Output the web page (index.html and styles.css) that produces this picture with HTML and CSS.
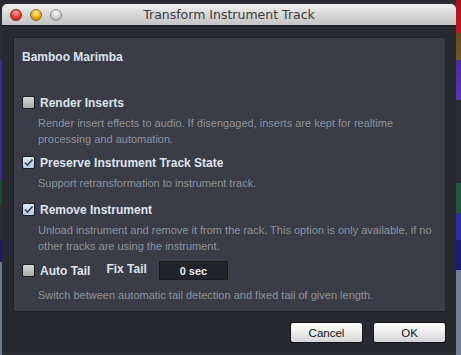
FILE: index.html
```html
<!DOCTYPE html>
<html>
<head>
<meta charset="utf-8">
<link rel="stylesheet" href="styles.css">
</head>
<body>
<div class="window">
  <div class="titlebar">
    <div class="lights">
      <span class="light red"></span>
      <span class="light yellow"></span>
      <span class="light gray"></span>
    </div>
    <div class="title">Transform Instrument Track</div>
    <div></div>
  </div>
  <div class="content">
    <div class="panel">
      <div class="name">Bamboo Marimba</div>

      <div class="option opt-render">
        <span class="check"></span>
        <span class="label">Render Inserts</span>
      </div>
      <div class="desc">Render insert effects to audio. If disengaged, inserts are kept for realtime<br>processing and automation.</div>

      <div class="option opt-preserve">
        <span class="check on"><svg viewBox="0 0 13 13" width="13" height="13"><path d="M3 6.5 L5.5 9 L10.5 3.5" fill="none" stroke="#3a3f4a" stroke-width="1.6"/></svg></span>
        <span class="label">Preserve Instrument Track State</span>
      </div>
      <div class="desc">Support retransformation to instrument track.</div>

      <div class="option opt-remove">
        <span class="check on"><svg viewBox="0 0 13 13" width="13" height="13"><path d="M3 6.5 L5.5 9 L10.5 3.5" fill="none" stroke="#3a3f4a" stroke-width="1.6"/></svg></span>
        <span class="label">Remove Instrument</span>
      </div>
      <div class="desc">Unload instrument and remove it from the rack. This option is only available, if no<br>other tracks are using the instrument.</div>

      <div class="option opt-tail">
        <span class="check"></span>
        <span class="label">Auto Tail</span>
        <span class="label fix">Fix Tail</span>
        <span class="field">0 sec</span>
      </div>
      <div class="desc">Switch between automatic tail detection and fixed tail of given length.</div>
    </div>
    <div class="buttons">
      <button class="btn">Cancel</button>
      <button class="btn">OK</button>
    </div>
  </div>
</div>
</body>
</html>
```

FILE: styles.css
```css
html, body {
  margin: 0;
  padding: 0;
}
body {
  width: 461px;
  height: 355px;
  overflow: hidden;
  box-sizing: border-box;
  padding: 4px 5px 3px 2px;
  font-family: "Liberation Sans", Arial, sans-serif;
  background:
    linear-gradient(to bottom,
      #b01010 0, #c81818 33px,
      #6a4a1a 33px, #7a5620 60px,
      #4a2aa0 60px, #5a36c0 100px,
      #2a2c32 100px, #2a2c32 183px,
      #1c5a3a 183px, #1c5a3a 213px,
      #2830a8 213px, #2830a8 240px,
      #1a1a78 240px, #1a1a78 270px,
      #6e7e98 270px, #6e7e98 355px) right top / 5px 100% no-repeat,
    linear-gradient(to bottom,
      #2a2c32 0, #2a2c32 60px,
      #3a2a98 60px, #3a2a98 180px,
      #1c4a30 180px, #1c4a30 205px,
      #2a2c32 205px, #2a2c32 240px,
      #1a1a70 240px, #1a1a70 262px,
      #6a7890 262px, #6a7890 355px) left top / 2px 100% no-repeat,
    #2a2c31;
}

.window {
  height: 348px;
  display: flex;
  flex-direction: column;
  background: #262930;
  border-radius: 5px 5px 4px 4px;
  overflow: hidden;
}

.titlebar {
  height: 21px;
  flex: none;
  display: grid;
  grid-template-columns: 1fr auto 1fr;
  align-items: center;
  background: linear-gradient(to bottom, #f0f0f0, #d2d2d2 60%, #c4c4c4);
  border-bottom: 1px solid #15171b;
}

.lights {
  display: flex;
  gap: 8px;
  padding-left: 8px;
}
.light {
  width: 12px;
  height: 12px;
  border-radius: 50%;
  box-sizing: border-box;
}
.red {
  background: radial-gradient(circle at 50% 30%, #ffb0a8 0, #f0453a 45%, #a01010 100%);
  border: 1px solid #8a2a24;
}
.yellow {
  background: radial-gradient(circle at 50% 30%, #fff0b0 0, #f5b820 45%, #a06a00 100%);
  border: 1px solid #9a7020;
}
.gray {
  background: radial-gradient(circle at 50% 30%, #ffffff 0, #d8d8d8 45%, #9a9a9a 100%);
  border: 1px solid #8a8a8a;
}

.title {
  font-family: "DejaVu Sans", sans-serif;
  font-size: 12.5px;
  color: #3c3c3c;
  white-space: nowrap;
}

.content {
  flex: 1;
  display: flex;
  flex-direction: column;
  padding: 11px 10px 9px 11px;
}

.panel {
  background: #3a3d47;
  border: 1px solid #1f2227;
  padding: 12px 8px 8px 8px;
}

.name {
  font-size: 12px;
  line-height: 14px;
  font-weight: bold;
  color: #d9e2ee;
}

.option {
  display: flex;
  align-items: center;
  height: 13px;
}
.opt-render { margin-top: 32px; }
.opt-preserve { margin-top: 9px; }
.opt-remove { margin-top: 12px; }
.opt-tail { margin-top: 7px; height: 19px; }

.check {
  width: 13px;
  height: 13px;
  box-sizing: border-box;
  border: 1px solid #1c1e22;
  border-radius: 2px;
  background: linear-gradient(to bottom, #d6d6d8, #a9abae);
  flex: none;
  display: flex;
}
.check.on {
  background: linear-gradient(to bottom, #dde9f8, #b3cbe8);
}
.check svg {
  margin: -1px;
}

.label {
  margin-left: 5px;
  font-size: 12px;
  font-weight: bold;
  color: #dde4ee;
  white-space: nowrap;
}
.label.fix {
  margin-left: 16px;
  position: relative;
  top: -2px;
}

.field {
  margin-left: 12px;
  width: 69px;
  height: 19px;
  box-sizing: border-box;
  background: #202328;
  border: 1px solid #1a1c20;
  color: #e8ecf2;
  font-size: 11px;
  font-weight: bold;
  display: flex;
  align-items: center;
  justify-content: center;
}

.desc {
  margin-top: 6px;
  margin-left: 16px;
  font-size: 11px;
  line-height: 16px;
  color: #8d939c;
  white-space: nowrap;
}
.opt-tail + .desc { margin-top: 7px; }

.buttons {
  display: flex;
  justify-content: flex-end;
  gap: 10px;
  margin-top: 10px;
  padding-right: 0;
}

.btn {
  width: 73px;
  height: 21px;
  box-sizing: border-box;
  border: 1px solid #15171a;
  border-radius: 3px;
  background: linear-gradient(to bottom, #ffffff, #ececec 50%, #d4d4d6);
  font-family: "Liberation Sans", Arial, sans-serif;
  font-size: 11.5px;
  color: #111;
  padding: 0;
}
```
